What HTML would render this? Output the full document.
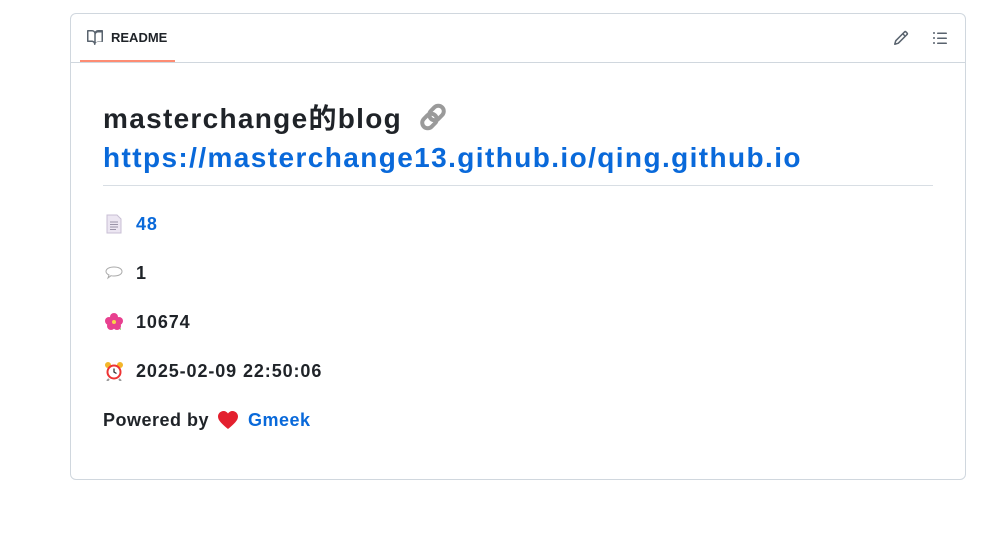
<!DOCTYPE html>
<html><head><meta charset="utf-8"><style>
body{margin:0;background:#fff;font-family:"Liberation Sans","Noto Sans CJK SC",sans-serif;color:#1f2328;}
.card{position:absolute;left:70px;top:13px;width:894px;height:465px;border:1px solid #d0d7de;border-radius:6px;}
.hdr{position:absolute;left:0;top:0;right:0;height:48px;border-bottom:1px solid #d0d7de;}
.tab{position:absolute;left:9px;top:0;width:95px;height:48px;border-bottom:2px solid #fd8c73;box-sizing:border-box;display:flex;align-items:center;padding-left:7px;font-size:13px;font-weight:600;}
.tab svg{margin-right:8px}
.ic{position:absolute;top:16px}
h1{position:absolute;left:32px;top:85px;margin:0;font-size:28px;line-height:39px;font-weight:700;width:830px;padding-bottom:8px;border-bottom:1px solid #d8dee4;}
h1 .t{letter-spacing:1.3px}
h1 a{color:#0969da;text-decoration:none;font-weight:700;letter-spacing:1.4px}
.row{position:absolute;left:33px;font-size:18px;font-weight:700;display:flex;align-items:center;height:24px;letter-spacing:0.9px}
.row svg{margin-right:12px}
.b{color:#0969da}
</style></head><body>
<div class="card">
<div class="hdr">
<div class="tab"><svg width="16" height="16" viewBox="0 0 16 16" fill="#59636e"><path d="M0 1.75A.75.75 0 0 1 .75 1h4.25c1.2 0 2.27.57 3 1.450A3.74 3.74 0 0 1 11 1h4.25a.75.75 0 0 1 .75.75v10.5a.75.75 0 0 1-.75.75h-4.5a2.25 2.25 0 0 0-2.25 2.25.75.75 0 0 1-1.5 0A2.25 2.25 0 0 0 4.750 13H.75a.75.75 0 0 1-.75-.75Zm7.25 2.5A2.25 2.25 0 0 0 5 2.5H1.5v9h3.25c.92 0 1.76.33 2.5.87Zm1.5 9.1a3.73 3.73 0 0 1 2.5-.85h3.25v-9H11a2.25 2.25 0 0 0-2.25 2.25Z"/></svg>README</div>
<svg class="ic" style="left:822px" width="16" height="16" viewBox="0 0 16 16" fill="#59636e"><path d="M11.013 1.427a1.75 1.75 0 0 1 2.474 0l1.086 1.086a1.75 1.75 0 0 1 0 2.474l-8.61 8.61c-.21.21-.47.364-.756.445l-3.251.93a.75.75 0 0 1-.927-.928l.929-3.25c.081-.286.235-.547.445-.758l8.61-8.61Zm.176 4.823L9.75 4.81l-6.286 6.287a.253.253 0 0 0-.064.108l-.558 1.953 1.953-.558a.253.253 0 0 0 .108-.064Zm1.238-3.763a.25.25 0 0 0-.354 0L10.811 3.75l1.439 1.44 1.263-1.263a.25.25 0 0 0 0-.354Z"/></svg>
<svg class="ic" style="left:861px" width="16" height="16" viewBox="0 0 16 16" fill="#59636e"><path d="M5.75 2.5h8.5a.75.75 0 0 1 0 1.5h-8.5a.75.75 0 0 1 0-1.5Zm0 5h8.5a.75.75 0 0 1 0 1.5h-8.5a.75.75 0 0 1 0-1.5Zm0 5h8.5a.75.75 0 0 1 0 1.5h-8.5a.75.75 0 0 1 0-1.5ZM2 14a1 1 0 1 1 0-2 1 1 0 0 1 0 2Zm1-6a1 1 0 1 1-2 0 1 1 0 0 1 2 0ZM2 4a1 1 0 1 1 0-2 1 1 0 0 1 0 2Z"/></svg>
</div>
<h1><span class="t">masterchange的blog</span> <svg width="32" height="30" viewBox="0 0 32 30" style="vertical-align:-4px;margin-left:8px"><g fill="none" stroke="#9a9a9a" stroke-width="4"><rect x="13" y="3" width="11" height="16" rx="5.5" transform="rotate(45 18.5 11)"/><rect x="6" y="11" width="11" height="16" rx="5.5" transform="rotate(45 11.5 19)"/></g></svg><br><a>https://masterchange13.github.io/qing.github.io</a></h1>
<div class="row" style="top:198px"><svg width="20" height="20" viewBox="0 0 18 20"><path d="M2 1h10l4 4v14H2z" fill="#ece6f2" stroke="#c8bfd4"/><path d="M5 8h8M5 10.5h8M5 13h8M5 15.5h6" stroke="#9a94a8"/></svg><span class="b">48</span></div>
<div class="row" style="top:247px"><svg width="20" height="18" viewBox="0 0 20 18"><path d="M10 3c5 0 8 2 8 4.5S15 12 10 12c-1 0-2 0-3-.3L4 14l1-3C3 10 2 9 2 7.5 2 5 5 3 10 3z" fill="#fff" stroke="#aaa"/></svg>1</div>
<div class="row" style="top:296px"><svg width="20" height="20" viewBox="0 0 20 20"><path d="M12 15l5 3-1-4z" fill="#6cbf3e"/><g fill="#e8408f"><circle cx="10" cy="5" r="4"/><circle cx="5" cy="9" r="4"/><circle cx="15" cy="9" r="4"/><circle cx="7" cy="14" r="4"/><circle cx="13" cy="14" r="4"/></g><circle cx="10" cy="10" r="2" fill="#f7d34a"/></svg>10674</div>
<div class="row" style="top:345px"><svg width="20" height="20" viewBox="0 0 20 20"><circle cx="4" cy="4" r="3" fill="#f3b62a"/><circle cx="16" cy="4" r="3" fill="#f3b62a"/><path d="M5 18l-2 2M15 18l2 2" stroke="#999" stroke-width="2"/><circle cx="10" cy="11" r="7.5" fill="#e33" /><circle cx="10" cy="11" r="5.5" fill="#fff"/><path d="M10 7.5V11l2.5 1.5" stroke="#333" stroke-width="1.3" fill="none"/></svg>2025-02-09 22:50:06</div>
<div class="row" style="top:394px;left:32px;letter-spacing:0.5px">Powered by <svg width="22" height="20" viewBox="0 0 22 20" style="margin:0 9px 0 8px"><path d="M11 19C5 14 1 10.5 1 6.5 1 3.5 3.5 1 6.5 1 8.5 1 10 2 11 3.5 12 2 13.5 1 15.5 1 18.5 1 21 3.5 21 6.5 21 10.5 17 14 11 19z" fill="#e3202e"/></svg><span class="b">Gmeek</span></div>
</div>
</body></html>
